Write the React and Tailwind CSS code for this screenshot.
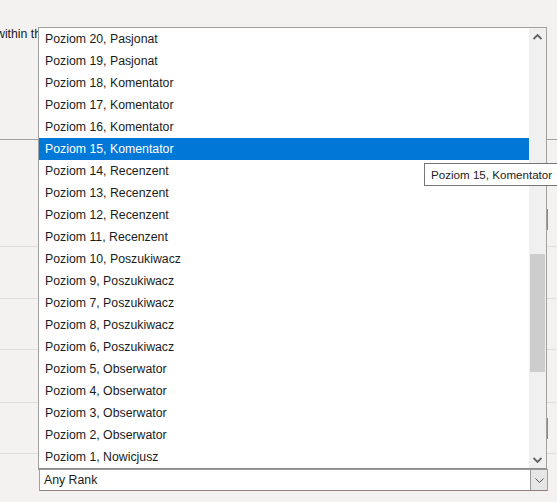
import React from "react";

const ranks = [
  "Poziom 20, Pasjonat",
  "Poziom 19, Pasjonat",
  "Poziom 18, Komentator",
  "Poziom 17, Komentator",
  "Poziom 16, Komentator",
  "Poziom 15, Komentator",
  "Poziom 14, Recenzent",
  "Poziom 13, Recenzent",
  "Poziom 12, Recenzent",
  "Poziom 11, Recenzent",
  "Poziom 10, Poszukiwacz",
  "Poziom 9, Poszukiwacz",
  "Poziom 7, Poszukiwacz",
  "Poziom 8, Poszukiwacz",
  "Poziom 6, Poszukiwacz",
  "Poziom 5, Obserwator",
  "Poziom 4, Obserwator",
  "Poziom 3, Obserwator",
  "Poziom 2, Obserwator",
  "Poziom 1, Nowicjusz",
];

const selected = 5;

function ArrowUp() {
  return (
    <svg width="9" height="6" viewBox="0 0 9 6">
      <path d="M0.5 5 L4.5 1 L8.5 5" fill="none" stroke="#606060" strokeWidth="1.8" />
    </svg>
  );
}

function ArrowDown() {
  return (
    <svg width="9" height="6" viewBox="0 0 9 6">
      <path d="M0.5 1 L4.5 5 L8.5 1" fill="none" stroke="#606060" strokeWidth="1.8" />
    </svg>
  );
}

export default function App() {
  return (
    <div
      className="relative w-[557px] h-[502px] overflow-hidden bg-[#f3f2f1] text-[#1b1b1b]"
      style={{ fontFamily: '"Liberation Sans", Arial, sans-serif' }}
    >
      {/* form behind the popup */}
      <div className="h-[140px] border-b border-[#a0a0a0] pt-[26px]">
        <div className="-ml-[4px] w-[42px] overflow-hidden text-[12.3px] leading-[16px] whitespace-nowrap">
          within the selected range
        </div>
      </div>
      <div className="h-[107px] border-b border-[#dedddc] pt-[69px] flex justify-end pr-[9px]">
        <div className="w-[200px] h-[21px] border border-[#8a8a8a] bg-white" />
      </div>
      <div className="h-[52px] border-b border-[#dedddc]" />
      <div className="h-[51px] border-b border-[#dedddc]" />
      <div className="h-[53px] border-b border-[#dedddc]" />
      <div className="h-[51px] border-b border-[#dedddc] pt-[15px] flex justify-end pr-[9px]">
        <div className="w-[200px] h-[21px] border border-[#8a8a8a] bg-white" />
      </div>
      <div className="pt-[15px] pl-[39px]">
        <div className="w-[509px] h-[22px] flex bg-white border border-[#a0a0a0] border-b-[#8e8078]">
          <div className="flex-1 pl-[4px] text-[12.3px] leading-[20px]">Any Rank</div>
          <div className="w-[17px] h-full bg-[#e6e6e6] border-l border-[#9a9a9a] flex items-center justify-center">
            <svg width="9" height="5" viewBox="0 0 9 5">
              <path d="M0.5 0.5 L4.5 4.5 L8.5 0.5" fill="none" stroke="#555" strokeWidth="1" />
            </svg>
          </div>
        </div>
      </div>

      {/* dropdown list popup */}
      <div className="absolute left-[38px] top-[27px] w-[509px] h-[442px] flex bg-white border border-[#a0a0a0] border-b-[#8a8a8a] shadow-[0_1px_0_#9a9a9a]">
        <ul className="flex-1 text-[12.3px]">
          {ranks.map((r, i) => (
            <li
              key={r}
              className={`h-[22px] leading-[22px] pl-[6px] whitespace-nowrap ${
                i === selected ? "bg-[#0078d7] text-white" : ""
              }`}
            >
              {r}
            </li>
          ))}
        </ul>
        <div className="w-[17px] bg-[#f0f0f0] flex flex-col">
          <div className="h-[17px] flex items-center justify-center">
            <ArrowUp />
          </div>
          <div className="flex-1 pt-[209px] pl-[1px] pr-[1px]">
            <div className="h-[118px] bg-[#cdcdcd]" />
          </div>
          <div className="h-[17px] flex items-center justify-center">
            <ArrowDown />
          </div>
        </div>
      </div>

      {/* tooltip */}
      <div className="absolute left-[424px] top-[163px] h-[23px] border border-[#767676] bg-white pl-[6px] pr-[14px] text-[11.6px] leading-[21px] whitespace-nowrap">
        Poziom 15, Komentator
      </div>
    </div>
  );
}
